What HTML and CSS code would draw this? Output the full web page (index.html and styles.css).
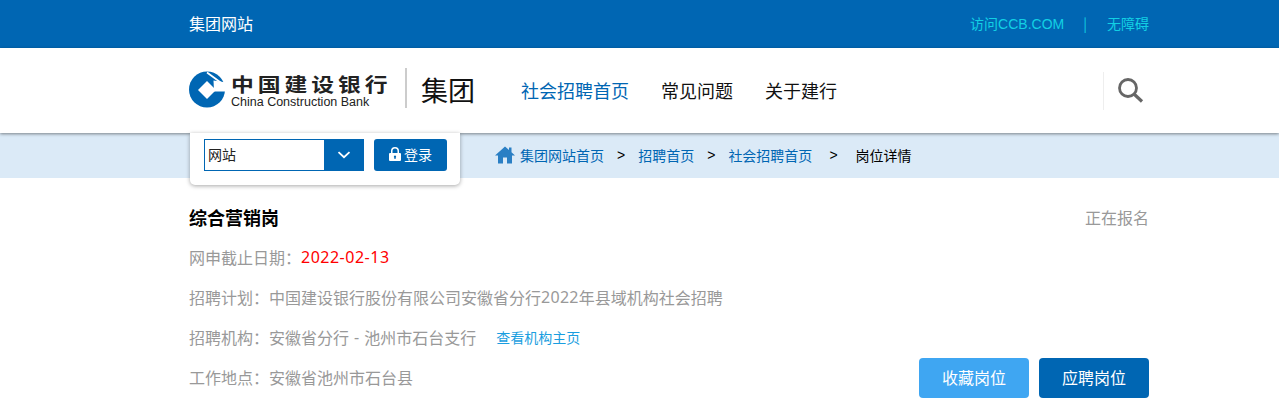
FILE: index.html
```html
<!DOCTYPE html>
<html lang="zh-CN">
<head>
<meta charset="utf-8">
<title>综合营销岗</title>
<link rel="stylesheet" href="styles.css">
</head>
<body>
<div class="topbar">
  <div class="wrap topbar-in">
    <span class="site">集团网站</span>
    <div class="toplinks"><a>访问CCB.COM</a><span class="sep">|</span><a>无障碍</a></div>
  </div>
</div>
<header class="header">
  <div class="wrap header-in">
    <div class="logo">
      <svg class="logo-mark" width="36" height="38" viewBox="0 0 36 38">
        <circle cx="18" cy="19.500" r="18" fill="#0066b3"/>
        <path fill="#fff" d="M24.500 10.500L37 12.500V21.500H25z"/>
        <path fill="#fff" d="M17.500 3.200l1-1.400 14 10.200-1 1.400z"/>
        <path fill="#fff" d="M18 11l9 9-9 9-9-9z"/>
      </svg>
      <div class="logo-text">
        <div class="logo-cn">中国建设银行</div>
        <div class="logo-en">China Construction Bank</div>
      </div>
    </div>
    <div class="group">集团</div>
    <nav class="nav"><a class="on">社会招聘首页</a><a>常见问题</a><a>关于建行</a></nav>
    <div class="search">
      <svg width="28" height="28" viewBox="0 0 28 28"><circle cx="11" cy="11" r="8.500" fill="none" stroke="#666" stroke-width="2.800"/><path d="M17 17l8 7.500" stroke="#666" stroke-width="3.200" fill="none"/></svg>
    </div>
  </div>
</header>
<div class="crumbbar">
  <div class="wrap crumb-in">
    <div class="panel">
      <div class="select"><span class="select-val">网站</span><span class="select-btn"><svg width="14" height="8" viewBox="0 0 14 8"><path d="M1.500 1.200L7 6.200l5.500-5" fill="none" stroke="#fff" stroke-width="1.800"/></svg></span></div>
      <a class="login"><svg width="12" height="14" viewBox="0 0 12 14"><path fill="#fff" d="M1 6h1V4a4 4 0 0 1 8 0v2h1a1 1 0 0 1 1 1v6a1 1 0 0 1-1 1H1a1 1 0 0 1-1-1V7a1 1 0 0 1 1-1zm2.500 0h5V4a2.500 2.500 0 0 0-5 0zM6 8.500a1.200 1.200 0 0 0-.6 2.200V12h1.200v-1.300A1.200 1.200 0 0 0 6 8.500z"/></svg><span>登录</span></a>
    </div>
    <nav class="crumbs">
      <svg class="home" width="20" height="18" viewBox="0 0 20 18"><path fill="#2a7fc4" d="M10 .5L0 9.500h3V17.500h5v-6h4v6h5V9.500h3l-3.500-3.200V1.500h-2.500v2.500z"/></svg>
      <a>集团网站首页</a><b>&gt;</b><a>招聘首页</a><b>&gt;</b><a>社会招聘首页</a><b class="b3">&gt;</b><span class="cur">岗位详情</span>
    </nav>
  </div>
</div>
<main class="wrap job">
  <div class="job-head"><h1>综合营销岗</h1><span class="status">正在报名</span></div>
  <div class="row">网申截止日期：<span class="date">2022-02-13</span></div>
  <div class="row">招聘计划：中国建设银行股份有限公司安徽省分行<span class="num">2022</span>年县域机构社会招聘</div>
  <div class="row">招聘机构：安徽省分行<span class="dash">-</span>池州市石台支行<a class="org">查看机构主页</a></div>
  <div class="row last"><span>工作地点：安徽省池州市石台县</span>
    <div class="actions"><a class="btn light">收藏岗位</a><a class="btn">应聘岗位</a></div>
  </div>
</main>
</body>
</html>
```
FILE: styles.css
```css
* { box-sizing: border-box; }
html, body { margin: 0; padding: 0; height: 418px; overflow: hidden; }
body { background: #fff; font-family: "Noto Sans CJK SC", "Liberation Sans", sans-serif; color: #000; }
a { text-decoration: none; color: inherit; }
.wrap { width: 960px; margin-left: 189px; }
.topbar { height: 48px; background: #0066b3; }
.topbar-in { height: 48px; padding-bottom: 3px; display: flex; align-items: center; justify-content: space-between; }
.site { color: #fff; font-size: 16px; }
.toplinks { display: flex; color: #12d0e4; font-size: 14px; align-items: center; }
.toplinks a:first-child { font-family: "Liberation Sans", "Noto Sans CJK SC", sans-serif; font-size: 14px; }
.sep { margin: 0 20px 0 19px; }
.header { height: 85px; background: #fff; box-shadow: 0 1px 3px rgba(0,0,0,.45); position: relative; z-index: 1; }
.header-in { height: 85px; display: flex; align-items: center; }
.logo { display: flex; align-items: center; width: 218px; height: 40px; border-right: 2px solid #ccc; align-self: flex-start; margin-top: 20px; }
.logo-mark { display: block; margin: 2px 6px 0 0; flex: none; }
.logo-text { width: 160px; margin-top: 6px; }
.logo-cn { font-size: 19px; line-height: 22px; font-weight: 700; color: #222; letter-spacing: 3.300px; white-space: nowrap; transform: scaleX(1.2); transform-origin: left center; }
.logo-en { font-family: "Liberation Sans", sans-serif; font-size: 12.500px; line-height: 14px; color: #222; white-space: nowrap; }
.group { font-size: 27px; line-height: 40px; margin: 0 0 2px 14px; width: 54px; color: #111; }
.nav { display: flex; margin: 0 0 2px 46px; font-size: 18px; gap: 32px; color: #111; }
.nav .on { color: #0066b3; }
.search { margin-left: auto; width: 46px; height: 38px; border-left: 1px solid #eee; display: flex; align-items: center; padding-left: 13px; }
.crumbbar { height: 45px; background: #dbeaf7; }
.crumb-in { position: relative; height: 45px; display: flex; align-items: center; }
.panel { position: absolute; z-index: 2; left: 1px; top: 0; width: 270px; height: 52px; background: #fff; border-radius: 0 0 5px 5px; box-shadow: 0 1px 4px rgba(0,0,0,.35); display: flex; padding: 6px 13px 0 14px; justify-content: space-between; align-items: flex-start; }
.select { display: flex; width: 160px; height: 32px; border: 1px solid #0066b3; background: #fff; }
.select-val { flex: 1; font-size: 14px; line-height: 28px; padding-left: 3px; color: #222; }
.select-btn { width: 39px; background: #0066b3; display: flex; align-items: center; justify-content: center; }
.login { width: 73px; height: 32px; padding-bottom: 2px; border-radius: 3px; background: #0066b3; color: #fff; font-size: 14px; line-height: 30px; display: flex; align-items: center; justify-content: center; gap: 3px; }
.crumbs { margin: 0 0 2px 306px; display: flex; align-items: center; font-size: 14px; color: #0066b3; }
.home { margin-right: 5px; }
.crumbs b { font-weight: 400; color: #000; font-family: "Liberation Sans", sans-serif; margin: 0 13px; }
.crumbs .b3 { margin: 0 18px 0 17px; }
.cur { color: #000; font-size: 14px; }
.job { padding-top: 19px; }
.job-head { height: 40px; display: flex; justify-content: space-between; align-items: center; }
.job-head h1 { margin: 0; font-size: 18px; font-weight: 700; }
.status { font-size: 16px; color: #999; }
.row { height: 40px; line-height: 40px; font-size: 16px; color: #999; display: flex; align-items: center; white-space: pre; }
.date { color: #f00; font-family: "Noto Sans", sans-serif; letter-spacing: .5px; }
.num { font-family: "Noto Sans", sans-serif; letter-spacing: .3px; }
.dash { font-family: "Noto Sans", sans-serif; margin: 0 5px; }
.org { font-size: 14px; color: #1a9ee0; margin-left: 20px; }
.last { justify-content: space-between; }
.actions { display: flex; gap: 10px; align-self: flex-start; margin-top: 1px; }
.btn { width: 110px; height: 40px; border-radius: 4px; background: #0066b3; color: #fff; font-size: 16px; text-align: center; line-height: 38px; }
.btn.light { background: #3fa6f2; }
```
